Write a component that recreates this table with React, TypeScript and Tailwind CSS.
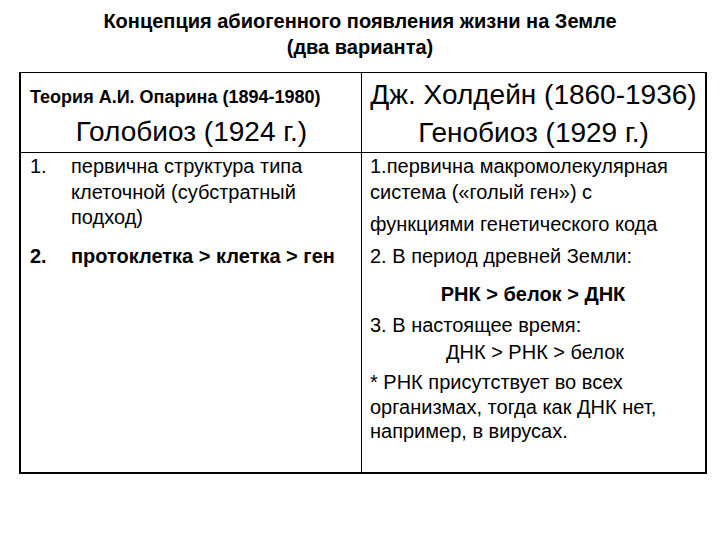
import React from 'react';

const rightLines: { text: string; cls: string }[] = [
  { text: '1.первична макромолекулярная', cls: 'mt-0' },
  { text: 'система («голый ген») с', cls: 'mt-[1px]' },
  { text: 'функциями генетического кода', cls: 'mt-[7px]' },
  { text: '2. В период древней Земли:', cls: 'mt-[7px]' },
  { text: 'РНК > белок > ДНК', cls: 'mt-[13px] font-bold text-center pr-[9px]' },
  { text: '3. В настоящее время:', cls: 'mt-[6px]' },
  { text: 'ДНК > РНК > белок', cls: 'mt-[2px] text-center pr-[5px]' },
  { text: '* РНК присутствует во всех', cls: 'mt-[5px]' },
  { text: 'организмах, тогда как ДНК нет,', cls: 'mt-0' },
  { text: 'например, в вирусах.', cls: '-mt-[1px]' },
];

export default function App() {
  return (
    <div
      className="w-[720px] h-[540px] bg-white text-black overflow-hidden"
      style={{ fontFamily: '"Liberation Sans", Arial, sans-serif' }}
    >
      {/* Title */}
      <div className="pt-[8px] text-center font-bold text-[20px] leading-[26px]">
        <p>Концепция абиогенного появления жизни на Земле</p>
        <p>(два варианта)</p>
      </div>

      {/* Table */}
      <div className="ml-[19px] mt-[12px] w-[688px] h-[402px] border-x-2 border-b-2 border-t border-black grid grid-cols-[341px_1fr] grid-rows-[80px_1fr]">
        {/* Header left */}
        <div className="border-r border-b border-black pl-[9px] pt-[13px]">
          <p className="font-bold text-[18px] leading-[22px]">Теория А.И. Опарина (1894-1980)</p>
          <p className="text-center text-[28px] leading-[32px] mt-[8px] pr-[8px]">Голобиоз (1924 г.)</p>
        </div>

        {/* Header right */}
        <div className="border-b border-black text-center text-[28px] leading-[32px] pt-[6px]">
          <p>Дж. Холдейн (1860-1936)</p>
          <p className="mt-[6px]">Генобиоз (1929 г.)</p>
        </div>

        {/* Body left */}
        <div className="border-r border-black pl-[9px] pt-[1px] text-[20px] leading-[25.5px]">
          <div className="flex">
            <span className="w-[41px] shrink-0">1.</span>
            <p>
              первична структура типа
              <br />
              клеточной (субстратный
              <br />
              подход)
            </p>
          </div>
          <div className="flex mt-[13px] font-bold">
            <span className="w-[41px] shrink-0">2.</span>
            <p>протоклетка &gt; клетка &gt; ген</p>
          </div>
        </div>

        {/* Body right */}
        <div className="pl-[8px] pt-[1px] text-[20px] leading-[25px]">
          {rightLines.map((line, i) => (
            <p key={i} className={line.cls}>
              {line.text}
            </p>
          ))}
        </div>
      </div>
    </div>
  );
}
